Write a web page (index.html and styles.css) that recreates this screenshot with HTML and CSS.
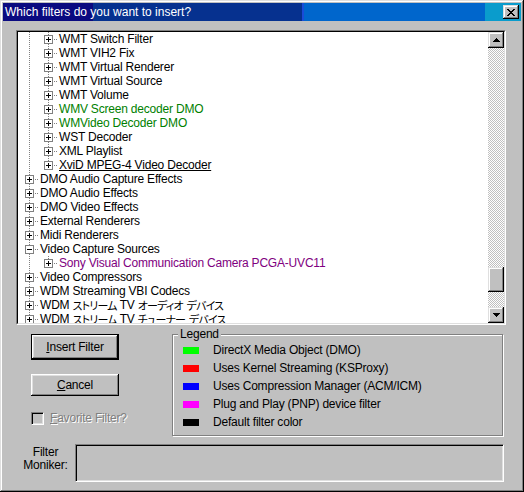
FILE: index.html
```html
<!DOCTYPE html>
<html>
<head>
<meta charset="utf-8">
<title>Insert Filters</title>
<link rel="stylesheet" href="styles.css">
</head>
<body>
<div class="window">
  <div class="titlebar">
    <span class="title">Which filters do you want to insert?</span>
    <span class="close"><svg width="8" height="7" viewBox="0 0 8 7" shape-rendering="crispEdges"><path d="M0 0h2v1H0zM6 0h2v1H6zM1 1h2v1H1zM5 1h2v1H5zM2 2h4v1H2zM3 3h2v1H3zM2 4h4v1H2zM1 5h2v1H1zM5 5h2v1H5zM0 6h2v1H0zM6 6h2v1H6z" fill="#000"/></svg></span>
  </div>
  <div class="dialog">
    <div class="treebox">
      <div class="treeview">
        <div class="tree">
          <div class="row"><span class="cell v"></span><span class="cell tee"><i class="exp"></i></span><span class="label">WMT Switch Filter</span></div>
          <div class="row"><span class="cell v"></span><span class="cell tee"><i class="exp"></i></span><span class="label">WMT VIH2 Fix</span></div>
          <div class="row"><span class="cell v"></span><span class="cell tee"><i class="exp"></i></span><span class="label">WMT Virtual Renderer</span></div>
          <div class="row"><span class="cell v"></span><span class="cell tee"><i class="exp"></i></span><span class="label">WMT Virtual Source</span></div>
          <div class="row"><span class="cell v"></span><span class="cell tee"><i class="exp"></i></span><span class="label">WMT Volume</span></div>
          <div class="row"><span class="cell v"></span><span class="cell tee"><i class="exp"></i></span><span class="label dmo">WMV Screen decoder DMO</span></div>
          <div class="row"><span class="cell v"></span><span class="cell tee"><i class="exp"></i></span><span class="label dmo">WMVideo Decoder DMO</span></div>
          <div class="row"><span class="cell v"></span><span class="cell tee"><i class="exp"></i></span><span class="label">WST Decoder</span></div>
          <div class="row"><span class="cell v"></span><span class="cell tee"><i class="exp"></i></span><span class="label">XML Playlist</span></div>
          <div class="row"><span class="cell v"></span><span class="cell ell"><i class="exp"></i></span><span class="label hot">XviD MPEG-4 Video Decoder</span></div>
          <div class="row"><span class="cell tee"><i class="exp"></i></span><span class="label">DMO Audio Capture Effects</span></div>
          <div class="row"><span class="cell tee"><i class="exp"></i></span><span class="label">DMO Audio Effects</span></div>
          <div class="row"><span class="cell tee"><i class="exp"></i></span><span class="label">DMO Video Effects</span></div>
          <div class="row"><span class="cell tee"><i class="exp"></i></span><span class="label">External Renderers</span></div>
          <div class="row"><span class="cell tee"><i class="exp"></i></span><span class="label">Midi Renderers</span></div>
          <div class="row"><span class="cell tee"><i class="exp minus"></i></span><span class="label">Video Capture Sources</span></div>
          <div class="row"><span class="cell v"></span><span class="cell ell"><i class="exp"></i></span><span class="label pnp">Sony Visual Communication Camera PCGA-UVC11</span></div>
          <div class="row"><span class="cell tee"><i class="exp"></i></span><span class="label">Video Compressors</span></div>
          <div class="row"><span class="cell tee"><i class="exp"></i></span><span class="label">WDM Streaming VBI Codecs</span></div>
          <div class="row"><span class="cell tee"><i class="exp"></i></span><span class="label">WDM <span class="jp">ストリーム</span> TV <span class="jp">オーディオ デバイス</span></span></div>
          <div class="row"><span class="cell tee"><i class="exp"></i></span><span class="label">WDM <span class="jp">ストリーム</span> TV <span class="jp">チューナー デバイス</span></span></div>
        </div>
        <div class="vscroll">
          <div class="sbtn"><svg width="7" height="4" viewBox="0 0 7 4" shape-rendering="crispEdges"><path d="M3 0h1v1H3zM2 1h3v1H2zM1 2h5v1H1zM0 3h7v1H0z" fill="#000"/></svg></div>
          <div class="track"><div class="thumb"></div></div>
          <div class="sbtn"><svg width="7" height="4" viewBox="0 0 7 4" shape-rendering="crispEdges"><path d="M0 0h7v1H0zM1 1h5v1H1zM2 2h3v1H2zM3 3h1v1H3z" fill="#000"/></svg></div>
        </div>
      </div>
    </div>

    <div class="lower">
      <div class="actions">
        <button class="btn btn-default" type="button"><u>I</u>nsert Filter</button>
        <button class="btn btn-cancel" type="button"><u>C</u>ancel</button>
        <div class="check"><span class="cbox"></span><span class="ctext"><u>F</u>avorite Filter?</span></div>
      </div>
      <div class="groupbox">
        <span class="caption">Legend</span>
        <div class="lrow"><span class="swatch sw-dmo"></span><span>DirectX Media Object (DMO)</span></div>
        <div class="lrow"><span class="swatch sw-ks"></span><span>Uses Kernel Streaming (KSProxy)</span></div>
        <div class="lrow"><span class="swatch sw-acm"></span><span>Uses Compression Manager (ACM/ICM)</span></div>
        <div class="lrow"><span class="swatch sw-pnp"></span><span>Plug and Play (PNP) device filter</span></div>
        <div class="lrow"><span class="swatch sw-def"></span><span>Default filter color</span></div>
      </div>
    </div>

    <div class="moniker">
      <div class="mlabel">Filter<br>Moniker:</div>
      <div class="mbox"></div>
    </div>
  </div>
</div>
</body>
</html>
```

FILE: styles.css
```css
* { box-sizing: border-box; }
html, body { margin: 0; padding: 0; }
body {
  background: #c0c0c0;
  font-family: "Liberation Sans", Arial, sans-serif;
  font-size: 12px;
  letter-spacing: -0.2px;
  color: #000;
}
.window {
  width: 524px;
  height: 492px;
  display: flex;
  flex-direction: column;
  padding: 3px;
  background: #c0c0c0;
  box-shadow: inset -1px -1px #000, inset 1px 1px #dfdfdf, inset -2px -2px #808080, inset 2px 2px #fff;
}
.titlebar {
  height: 18px;
  flex: 0 0 18px;
  display: flex;
  align-items: center;
  justify-content: space-between;
  padding: 0 2px 0 2px;
  color: #fff;
  background: linear-gradient(to right, #0a0a80 0 90px, #06318f 90px 299px, #1a4cd8 299px 301px, #0066cc 301px 482px, #0a9ccc 482px);
}
.title { line-height: 14px; letter-spacing: 0; }
.close {
  width: 16px;
  height: 14px;
  display: flex;
  align-items: center;
  justify-content: center;
  background: #c0c0c0;
  box-shadow: inset -1px -1px #000, inset 1px 1px #dfdfdf, inset -2px -2px #808080, inset 2px 2px #fff;
}
.close svg { margin-left: -1px; }

.dialog {
  flex: 1;
  display: flex;
  flex-direction: column;
  padding: 0 15px 0 13px;
}
.treebox {
  margin-top: 9px;
  height: 295px;
  display: flex;
  border: 1px solid;
  border-color: #808080 #fff #fff #808080;
}
.treeview {
  flex: 1;
  display: flex;
  border: 1px solid;
  border-color: #000 #dfdfdf #dfdfdf #000;
  min-width: 0;
}
.tree {
  flex: 1;
  background: #fff;
  overflow: hidden;
  padding-left: 2px;
}
.row {
  display: flex;
  height: 14px;
  align-items: flex-start;
  white-space: nowrap;
}
.cell {
  flex: 0 0 19px;
  width: 19px;
  height: 14px;
  display: flex;
  justify-content: center;
  align-items: flex-start;
  background-repeat: no-repeat;
}
.cell.v {
  background-image: repeating-linear-gradient(to bottom, #808080 0 1px, transparent 1px 2px);
  background-position: 9px 0;
  background-size: 1px 14px;
}
.cell.tee {
  background-image: repeating-linear-gradient(to right, #808080 0 1px, transparent 1px 2px), repeating-linear-gradient(to bottom, #808080 0 1px, transparent 1px 2px);
  background-position: 9px 7px, 9px 0;
  background-size: 10px 1px, 1px 14px;
}
.cell.ell {
  background-image: repeating-linear-gradient(to right, #808080 0 1px, transparent 1px 2px), repeating-linear-gradient(to bottom, #808080 0 1px, transparent 1px 2px);
  background-position: 9px 7px, 9px 0;
  background-size: 10px 1px, 1px 8px;
}
.exp {
  display: block;
  width: 9px;
  height: 9px;
  margin-top: 3px;
  border: 1px solid #808080;
  background-color: #fff;
  background-image: linear-gradient(#000, #000), linear-gradient(#000, #000);
  background-size: 5px 1px, 1px 5px;
  background-position: 1px 3px, 3px 1px;
  background-repeat: no-repeat;
}
.exp.minus {
  background-image: linear-gradient(#000, #000);
  background-size: 5px 1px;
  background-position: 1px 3px;
}
.label {
  margin-left: 1px;
  height: 14px;
  line-height: 14px;
}
.label.dmo { color: #008000; }
.label.pnp { color: #800080; }
.label.hot { text-decoration: underline; }
.jp {
  font-family: "Noto Sans CJK JP", sans-serif;
  font-feature-settings: "palt";
  font-size: 11px;
  line-height: 12px;
  letter-spacing: -0.8px;
  word-spacing: 2px;
  vertical-align: top;
  display: inline-block;
  height: 13px;
  padding-top: 1px;
}

.vscroll {
  flex: 0 0 16px;
  width: 16px;
  display: flex;
  flex-direction: column;
}
.sbtn {
  flex: 0 0 16px;
  height: 16px;
  display: flex;
  align-items: center;
  justify-content: center;
  background: #c0c0c0;
  box-shadow: inset -1px -1px #000, inset 1px 1px #dfdfdf, inset -2px -2px #808080, inset 2px 2px #fff;
}
.track {
  flex: 1;
  background: conic-gradient(#fff 25%, #c0c0c0 0 50%, #fff 0 75%, #c0c0c0 0) 0 0 / 2px 2px;
}
.thumb {
  margin-top: 219px;
  height: 25px;
  background: #c0c0c0;
  box-shadow: inset -1px -1px #000, inset 1px 1px #dfdfdf, inset -2px -2px #808080, inset 2px 2px #fff;
}

.lower {
  margin-top: 9px;
  display: flex;
}
.actions {
  flex: 0 0 156px;
  width: 156px;
  padding-left: 15px;
  display: flex;
  flex-direction: column;
  align-items: flex-start;
}
.btn {
  width: 88px;
  padding: 0;
  font: inherit;
  letter-spacing: inherit;
  color: #000;
  background: #c0c0c0;
  border: 0;
  display: flex;
  align-items: center;
  justify-content: center;
}
.btn-default {
  height: 26px;
  border: 1px solid #000;
  box-shadow: inset -1px -1px #000, inset 1px 1px #fff, inset -2px -2px #808080, inset 2px 2px #dfdfdf;
}
.btn-cancel {
  height: 22px;
  margin-top: 14px;
  box-shadow: inset -1px -1px #000, inset 1px 1px #fff, inset -2px -2px #808080, inset 2px 2px #dfdfdf;
}
.check {
  margin-top: 16px;
  display: flex;
  align-items: center;
  height: 13px;
}
.cbox {
  width: 13px;
  height: 13px;
  border: 1px solid;
  border-color: #808080 #fff #fff #808080;
  box-shadow: inset 1px 1px #000, inset -1px -1px #dfdfdf;
  background: #c0c0c0;
}
.ctext {
  margin-left: 6px;
  color: #808080;
  text-shadow: 1px 1px 0 #fff;
  line-height: 13px;
}

.groupbox {
  position: relative;
  width: 331px;
  height: 102px;
  border: 1px solid #808080;
  box-shadow: inset 1px 1px #fff, 1px 1px #fff;
  padding: 6px 0 4px 10px;
  display: flex;
  flex-direction: column;
}
.caption {
  position: absolute;
  top: -8px;
  left: 5px;
  padding: 0 2px;
  line-height: 14px;
  background: #c0c0c0;
}
.lrow {
  height: 18px;
  display: flex;
  align-items: center;
}
.swatch {
  flex: 0 0 16px;
  width: 16px;
  height: 7px;
  margin-right: 14px;
}
.sw-dmo { background: #00ff00; }
.sw-ks { background: #ff0000; }
.sw-acm { background: #0000ff; }
.sw-pnp { background: #ff00ff; }
.sw-def { background: #000000; }

.moniker {
  margin-top: 8px;
  display: flex;
  height: 38px;
}
.mlabel {
  flex: 0 0 59px;
  width: 59px;
  padding-top: 2px;
  text-align: center;
  line-height: 13px;
}
.mbox {
  flex: 0 0 429px;
  width: 429px;
  height: 38px;
  border: 1px solid;
  border-color: #808080 #fff #fff #808080;
  box-shadow: inset 1px 1px #000, inset -1px -1px #dfdfdf;
  background: #c0c0c0;
}
```
